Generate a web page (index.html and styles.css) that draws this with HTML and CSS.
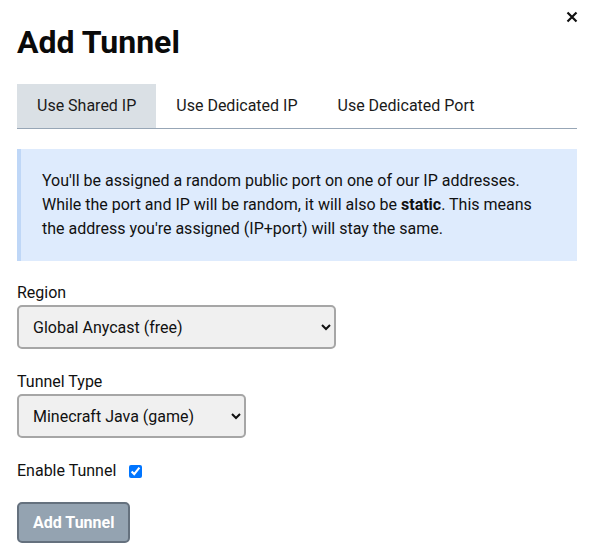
FILE: index.html
```html
<!DOCTYPE html>
<html>
<head>
<meta charset="utf-8">
<link rel="stylesheet" href="styles.css">
</head>
<body>
<div class="modal">
  <button class="close" aria-label="Close">
    <svg width="12" height="12" viewBox="0 0 12 12"><path d="M1.5 1.5 L10.5 10.5 M10.5 1.5 L1.5 10.5" stroke="#111" stroke-width="2.2" stroke-linecap="butt"/></svg>
  </button>
  <h1 class="title">Add Tunnel</h1>
  <div class="tabs">
    <div class="tab active">Use Shared IP</div>
    <div class="tab">Use Dedicated IP</div>
    <div class="tab">Use Dedicated Port</div>
  </div>
  <div class="info">
    You'll be assigned a random public port on one of our IP addresses. While the port and IP will be random, it will also be <b>static</b>. This means the address you're assigned (IP+port) will stay the same.
  </div>
  <div class="field">
    <label class="label">Region</label>
    <select class="select wide">
      <option>Global Anycast (free)</option>
    </select>
  </div>
  <div class="field second">
    <label class="label">Tunnel Type</label>
    <select class="select narrow">
      <option>Minecraft Java (game)</option>
    </select>
  </div>
  <div class="check-row">
    <span>Enable Tunnel</span>
    <input type="checkbox" class="check" checked>
  </div>
  <button class="submit">Add Tunnel</button>
</div>
</body>
</html>
```
FILE: styles.css
```css
html, body {
  margin: 0;
  padding: 0;
  background: #ffffff;
}
body {
  font-family: Roboto, "Noto Sans", sans-serif;
  font-size: 16px;
  color: #111111;
}
.modal {
  position: relative;
  width: 560px;
  padding: 23px 17px 0;
}
.close {
  position: absolute;
  top: 11px;
  right: 16px;
  width: 12px;
  height: 12px;
  padding: 0;
  border: 0;
  background: none;
  display: flex;
}
.title {
  margin: 0 0 23px;
  font-size: 32px;
  line-height: 38px;
  font-weight: 700;
  color: #0a0a0a;
}
.tabs {
  display: flex;
  border-bottom: 1px solid #97a6b6;
}
.tab {
  padding: 12px 20px;
  line-height: 20px;
  color: #1a1a1a;
}
.tab.active {
  background: #dae0e5;
}
.info {
  margin-top: 20px;
  background: #deebfd;
  border-left: 4px solid #bfd7f7;
  padding: 20px 20px 20px 21px;
  line-height: 24px;
  color: #111111;
}
.info b {
  font-weight: 700;
}
.field {
  margin-top: 20px;
  display: flex;
  flex-direction: column;
  align-items: flex-start;
}
.field.second {
  margin-top: 21px;
}
.label {
  line-height: 24px;
  color: #111111;
}
.select {
  height: 44px;
  font-family: Roboto, "Noto Sans", sans-serif;
  font-size: 16px;
  color: #111111;
  background-color: #f0f0f0;
  border: 2px solid #a6a6a6;
  border-radius: 5px;
  padding: 0 8px 0 10px;
}
.select.wide {
  width: 319px;
}
.select.narrow {
  width: 229px;
}
.check-row {
  margin-top: 21px;
  display: flex;
  align-items: center;
  line-height: 24px;
}
.check {
  margin: 0 0 0 13px;
  width: 13px;
  height: 13px;
}
.submit {
  margin-top: 19px;
  display: block;
  font-family: Roboto, "Noto Sans", sans-serif;
  font-size: 16px;
  font-weight: 700;
  color: #ffffff;
  background: #94a3b1;
  border: 2px solid #65717e;
  border-radius: 5px;
  padding: 8px 14px;
  line-height: 21px;
}
```
